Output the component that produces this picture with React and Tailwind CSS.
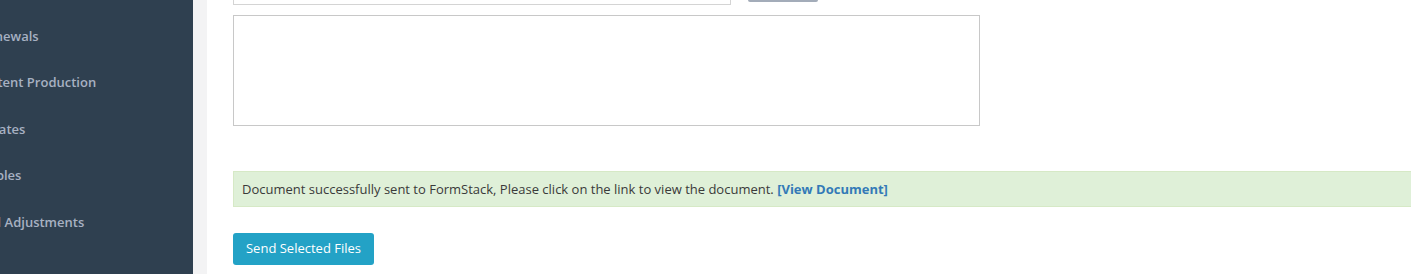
const navItems = [
  { label: 'Renewals', shift: '-ml-[21px]' },
  { label: 'Content Production', shift: '-ml-[27px]' },
  { label: 'Updates', shift: '-ml-[27px]' },
  { label: 'Tables', shift: '-ml-[19px]' },
  { label: 'Manual Adjustments', shift: '-ml-[46px]' },
];

export default function App() {
  return (
    <div
      className="flex h-[274px] w-[1411px] overflow-hidden bg-white"
      style={{ fontFamily: '"Open Sans", "Liberation Sans", sans-serif' }}
    >
      <aside className="w-[193px] shrink-0 overflow-hidden bg-[#2f4050] pt-[13px]">
        <ul>
          {navItems.map(item => (
            <li key={item.label} className="flex h-[46.5px] items-center whitespace-nowrap">
              <span className={`${item.shift} text-[13px] font-semibold text-[#a7b1c2]`}>
                {item.label}
              </span>
            </li>
          ))}
        </ul>
      </aside>

      <div className="w-[14px] shrink-0 bg-[#f3f3f4]" />

      <main className="min-w-0 flex-1 overflow-hidden pl-[26px]">
        <div className="-mt-[32px] flex items-end gap-[17px]">
          <div className="h-[35px] w-[498px] border border-[#d4d4d4] bg-white" />
          <div className="mb-[3px] h-[34px] w-[70px] rounded-[2px] border-b-2 border-[#a3acb9] bg-white" />
        </div>

        <textarea
          className="mt-[10px] block h-[111px] w-[747px] resize-none border border-[#c8c8c8] bg-white"
          readOnly
        />

        <div className="mt-[45px] w-[1300px] border border-[#d6e9c6] bg-[#dff0d8] py-[9px] pl-[8px] text-[13px] leading-[16px] text-[#3a3a3a]">
          Document successfully sent to FormStack, Please click on the link to view the document.{' '}
          <a href="#" className="font-bold text-[#337ab7]">[View Document]</a>
        </div>

        <button className="mt-[26px] h-[32px] w-[141px] rounded-[3px] bg-[#23a2c6] text-[13px] text-white">
          Send Selected Files
        </button>
      </main>
    </div>
  );
}
